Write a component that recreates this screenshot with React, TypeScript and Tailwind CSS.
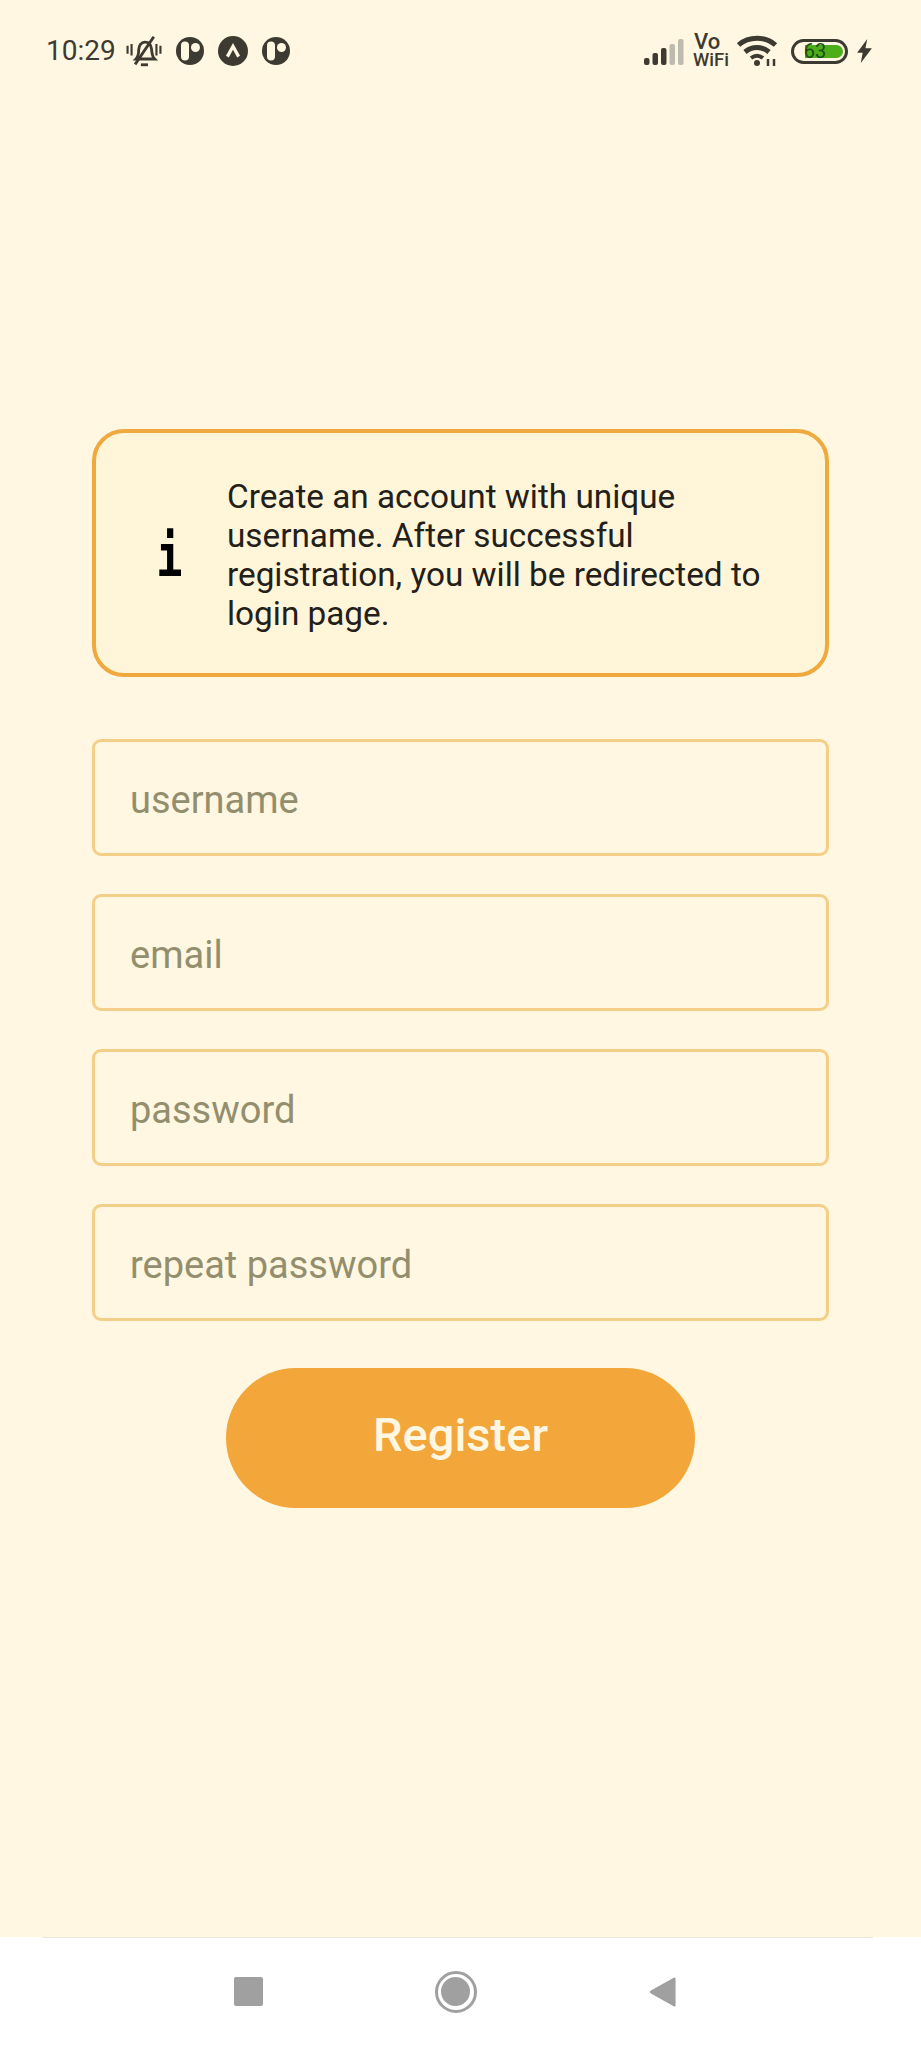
const roboto = "font-['Roboto',sans-serif]";

function StatusIcons() {
  return (
    <div className="flex items-center">
      <svg width="38" height="32" viewBox="0 0 40 36" fill="none" stroke="#3d3a32" strokeWidth="3.200" className="mr-[13px]">
        <path d="M1.500 12v9M6 10v13M34 10v13M38.500 12v9" strokeWidth="2.400" />
        <path d="M11 27c3-3 3-6 3-10 0-5 3-9 7-9s7 3 7.500 8c.3 4 .5 8 3.500 11z" />
        <path d="M10 33 31 2" />
        <path d="M16.500 33.500h8" strokeWidth="3.200" />
      </svg>
      <AppBadge />
      <svg width="30" height="30" viewBox="0 0 32 32" className="mx-[14px]">
        <circle cx="16" cy="16" r="16" fill="#3d3a32" />
        <path d="M10 22l6-11 6 11" fill="none" stroke="#fff7e1" strokeWidth="3.500" />
      </svg>
      <AppBadge />
    </div>
  );
}

function AppBadge() {
  return (
    <svg width="28" height="28" viewBox="0 0 28 28">
      <circle cx="14" cy="14" r="14" fill="#3d3a32" />
      <rect x="5" y="4.500" width="8" height="19" rx="4" fill="#fff7e1" />
      <circle cx="19.500" cy="10.500" r="4.500" fill="#fff7e1" />
    </svg>
  );
}

function SystemIcons() {
  return (
    <div className="flex items-center">
      <svg width="40" height="26" viewBox="0 0 40 26" className="mr-[9px] mt-[1px]">
        <rect x="0" y="19" width="5.500" height="7" rx="2" fill="#3d3a32" />
        <rect x="8.500" y="14" width="5.500" height="12" rx="2" fill="#3d3a32" />
        <rect x="17" y="9" width="5.500" height="17" rx="2" fill="#3d3a32" />
        <rect x="25.500" y="5" width="5.500" height="21" rx="2" fill="#bdbbae" />
        <rect x="34" y="0" width="5.500" height="26" rx="2" fill="#bdbbae" />
      </svg>
      <div className="mr-[8px] flex flex-col items-start font-medium text-[#3d3a32]">
        <span className="pl-[1px] text-[22px] leading-[18px]">Vo</span>
        <span className="text-[18.500px] leading-[18px]">WiFi</span>
      </div>
      <svg width="42" height="32" viewBox="0 0 42 32" fill="none" stroke="#3d3a32" strokeWidth="5" className="mr-[12px]">
        <path d="M1.500 10c10-9 27-9 37 0" />
        <path d="M8 17c7-6 17-6 24 0" />
        <path d="M14 23c4-3 8-3 12 0" strokeWidth="4" />
        <circle cx="20" cy="28" r="3" fill="#3d3a32" stroke="none" />
        <path d="M31 24v7M37 24v7" strokeWidth="2.500" />
      </svg>
      <div className="relative mr-[9px] flex h-[25px] w-[57px] items-center justify-center rounded-full border-[3px] border-[#3d3a32] bg-[#fff7e1]">
        <div className="absolute bottom-[3px] left-[11px] top-[3px] w-[38px] rounded-r-full bg-[#4caf1a]" />
        <span className="relative -ml-[9px] text-[20px] leading-none text-[#1f4c10]">63</span>
      </div>
      <svg width="15" height="24" viewBox="0 0 16 26">
        <path d="M11 0 0 15h6l-2 11 12-16H9z" fill="#3d3a32" />
      </svg>
    </div>
  );
}

function Field({ placeholder }: { placeholder: string }) {
  return (
    <input
      placeholder={placeholder}
      readOnly
      className="h-[117px] w-full rounded-[9px] border-[3px] border-[#f4cf87] bg-transparent pl-[35px] pt-[4px] text-[38px] placeholder:text-[#938e6e] outline-none"
    />
  );
}

export default function App() {
  return (
    <div className={`${roboto} flex h-[2048px] w-[921px] flex-col bg-[#fff7e1]`}>
      <div className="flex h-[102px] items-center justify-between pl-[46px] pr-[49px]">
        <div className="flex items-center gap-[9px]">
          <span className="text-[28px] leading-none text-[#3d3a32]">10:29</span>
          <StatusIcons />
        </div>
        <SystemIcons />
      </div>

      <div className="flex flex-1 flex-col px-[92px] pt-[327px]">
        <div className="flex h-[248px] items-center rounded-[32px] border-[4px] border-[#efa93f] bg-[#fff5d8] pl-[56px] pr-[50px]">
          <span className="w-[75px] shrink-0 pt-[6px] font-['DejaVu_Sans_Mono',monospace] text-[58px] font-bold leading-none text-black">
            <span className="inline-block scale-x-[0.75]">i</span>
          </span>
          <p className="pt-[3px] text-[33.3px] leading-[39px] text-[#222019]">
            Create an account with unique username. After successful registration, you will be redirected to login page.
          </p>
        </div>

        <div className="mt-[62px] flex flex-col gap-[38px]">
          <Field placeholder="username" />
          <Field placeholder="email" />
          <Field placeholder="password" />
          <Field placeholder="repeat password" />
        </div>

        <button className="mx-auto mt-[47px] h-[140px] w-[469px] rounded-[70px] bg-[#f3a63a] pb-[6px] text-[47px] font-medium text-[#fff7e1]">
          Register
        </button>
      </div>

      <div className="relative flex h-[111px] items-center justify-center gap-[172px] bg-white pb-[2px] pr-[12px]">
        <div className="absolute left-[42px] right-[48px] top-0 h-[1px] bg-[#e6eadb]" />
        <div className="h-[29px] w-[29px] rounded-[2px] bg-[#a0a0a0]" />
        <div className="flex h-[42px] w-[42px] items-center justify-center rounded-full border-[3px] border-[#a0a0a0]">
          <div className="h-[29px] w-[29px] rounded-full bg-[#a0a0a0]" />
        </div>
        <svg width="27" height="32" viewBox="0 0 29 34">
          <path d="M27 1.500c1-.5 1.500 0 1.500 1v29c0 1-.5 1.500-1.500 1L2 18.500c-1.500-1-1.500-2 0-3z" fill="#a0a0a0" />
        </svg>
      </div>
    </div>
  );
}
